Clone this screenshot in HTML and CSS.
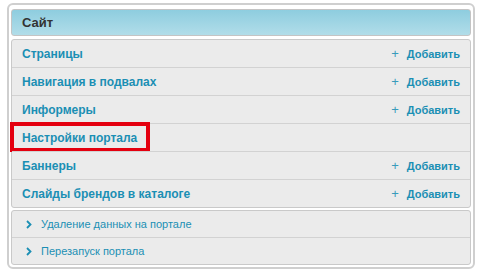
FILE: index.html
```html
<!DOCTYPE html>
<html lang="ru">
<head>
    <meta charset="UTF-8">
    <title>Сайт</title>
    <link rel="stylesheet" href="styles.css">
</head>
<body>
    <div class="frame">
        <div class="panel-head">Сайт</div>

        <ul class="group">
            <li class="row">
                <a class="row-title" href="#">Страницы</a>
                <a class="row-add" href="#"><span class="plus">+</span>Добавить</a>
            </li>
            <li class="row">
                <a class="row-title" href="#">Навигация в подвалах</a>
                <a class="row-add" href="#"><span class="plus">+</span>Добавить</a>
            </li>
            <li class="row">
                <a class="row-title" href="#">Информеры</a>
                <a class="row-add" href="#"><span class="plus">+</span>Добавить</a>
            </li>
            <li class="row">
                <a class="row-title" href="#">Настройки портала</a>
                <span class="highlight"></span>
            </li>
            <li class="row">
                <a class="row-title" href="#">Баннеры</a>
                <a class="row-add" href="#"><span class="plus">+</span>Добавить</a>
            </li>
            <li class="row">
                <a class="row-title" href="#">Слайды брендов в каталоге</a>
                <a class="row-add" href="#"><span class="plus">+</span>Добавить</a>
            </li>
        </ul>

        <ul class="group tools">
            <li class="row small">
                <svg class="chev" width="6" height="9" viewBox="0 0 6 9"><path d="M1 1 L4.5 4.5 L1 8" fill="none" stroke="currentColor" stroke-width="1.8"/></svg>
                <a class="row-link" href="#">Удаление данных на портале</a>
            </li>
            <li class="row small">
                <svg class="chev" width="6" height="9" viewBox="0 0 6 9"><path d="M1 1 L4.5 4.5 L1 8" fill="none" stroke="currentColor" stroke-width="1.8"/></svg>
                <a class="row-link" href="#">Перезапуск портала</a>
            </li>
        </ul>
    </div>
</body>
</html>
```

FILE: styles.css
```css
body {
    margin: 0;
    padding: 3px 6px 0 7px;
    background: #fff;
    font-family: "Liberation Sans", Arial, sans-serif;
}
.frame {
    border: 2px solid #cfcfcf;
    border-radius: 6px;
    padding: 4px 2px 2px 2px;
}
.panel-head {
    height: 25px;
    line-height: 25px;
    padding: 0 10px;
    border: 1px solid #c4c4c4;
    border-radius: 3px;
    background: linear-gradient(#8ecddf, #b1dde9);
    font-weight: bold;
    font-size: 13px;
    color: #333;
}
.group {
    list-style: none;
    margin: 3px 0 0 0;
    padding: 0;
    border: 1px solid #c9c9c9;
    border-radius: 3px;
    background: #ebebeb;
}
.group.tools {
    margin-top: 2px;
}
.row {
    position: relative;
    display: flex;
    align-items: center;
    justify-content: space-between;
    height: 27px;
    padding: 0 10px;
    border-top: 1px solid #d2d2d2;
}
.row:first-child {
    border-top: none;
}
a {
    text-decoration: none;
    color: #1b8fb4;
}
.row-title {
    font-weight: bold;
    font-size: 12px;
}
.row-add {
    font-weight: bold;
    font-size: 11px;
}
.plus {
    font-weight: normal;
    font-size: 13px;
    color: #3a9bbb;
    margin-right: 8px;
}
.highlight {
    position: absolute;
    left: -2px;
    top: -2px;
    width: 140px;
    height: 30px;
    border: 4px solid #e4000f;
    box-sizing: border-box;
}
.row.small {
    height: 26px;
    justify-content: flex-start;
    padding-left: 14px;
}
.chev {
    color: #1b8fb4;
    margin-right: 9px;
}
.row-link {
    font-size: 11px;
}
```
